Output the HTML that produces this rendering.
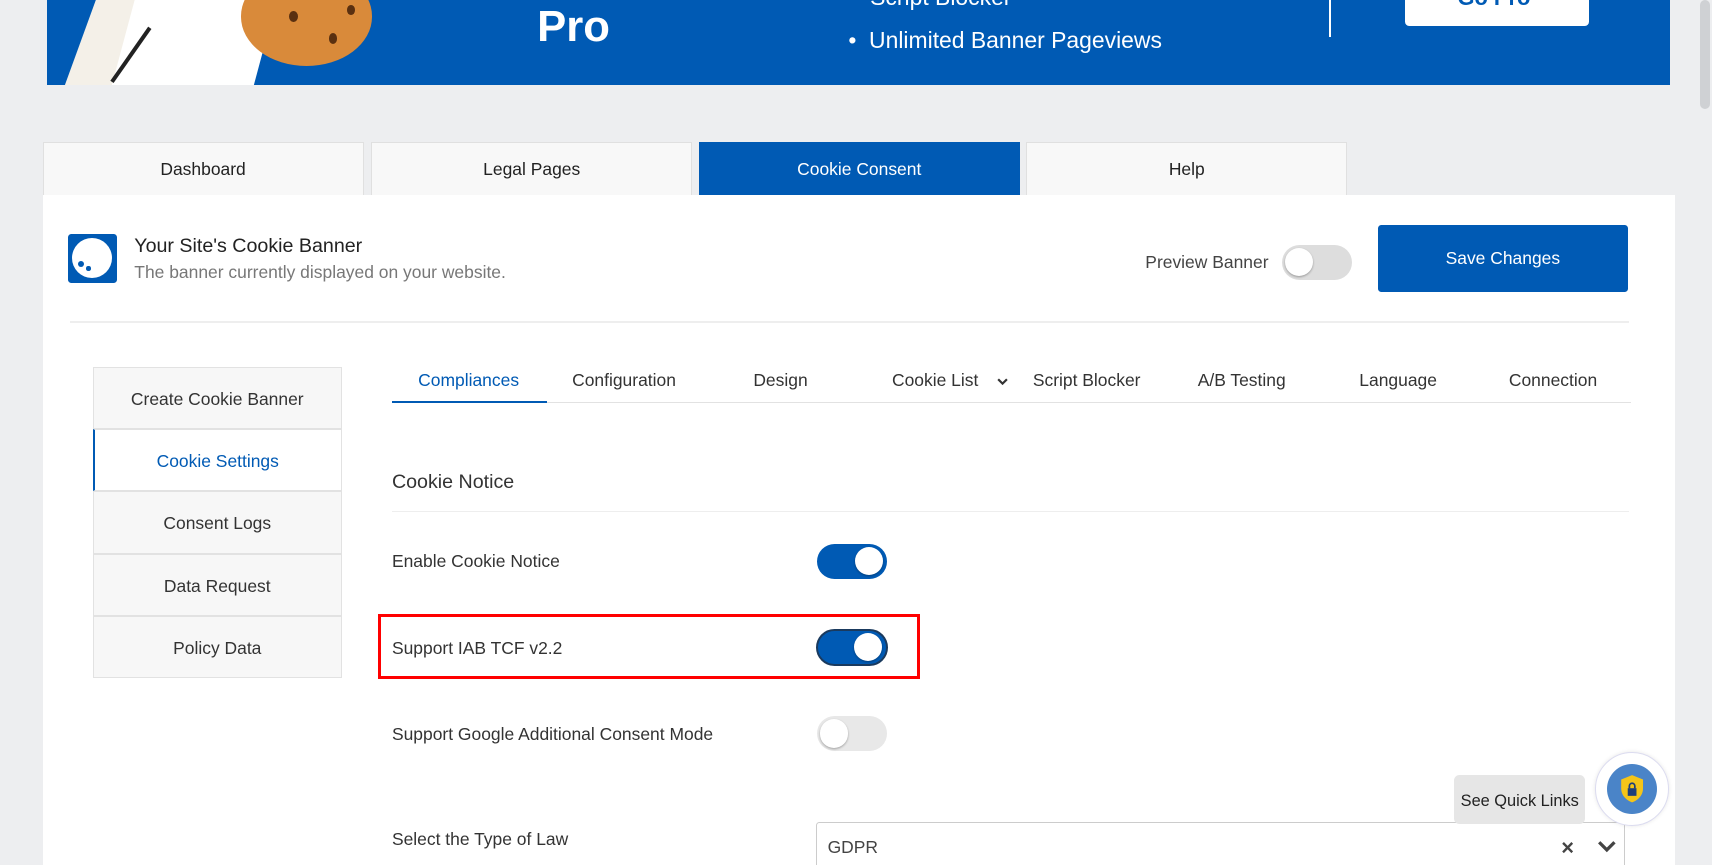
<!DOCTYPE html>
<html><head><meta charset="utf-8"><style>
*{box-sizing:border-box;margin:0;padding:0}
html,body{width:1712px;height:865px;overflow:hidden;background:#edeef0}
#w{zoom:1.0918;position:relative;width:1568px;height:792px;font-family:"Liberation Sans",sans-serif;color:#333}
.a{position:absolute}
.t{white-space:nowrap}
.tab{position:absolute;top:130px;height:49px;width:294px;background:#f8f8f8;border:1px solid #e0e0e0;border-bottom:none;text-align:center;line-height:49px;font-size:16px;color:#222}
.mi{position:absolute;left:85px;width:228px;height:57px;background:#f7f7f7;border:1px solid #e2e2e2;text-align:center;line-height:57px;font-size:16px;color:#333}
.st{position:absolute;top:339px;font-size:16px;color:#333;white-space:nowrap}
.tg{position:absolute;width:64px;height:32px;border-radius:16px}
.kn{position:absolute;top:3px;width:26px;height:26px;border-radius:50%;background:#fff;box-shadow:0 1px 2px rgba(0,0,0,.3)}
.lb{position:absolute;left:359px;font-size:16px;color:#333;white-space:nowrap}
</style></head><body><div id="w">
<div class="a" style="left:43px;top:0;width:1487px;height:78px;background:#005ab4;overflow:hidden">
 <div class="a" style="left:30px;top:-20px;width:150px;height:120px;background:#f4f0e8;transform:skewX(-20deg)"></div>
 <div class="a" style="left:70px;top:-20px;width:130px;height:120px;background:#fff;transform:skewX(-15deg)"></div>
 <div class="a" style="left:75px;top:20px;width:4px;height:60px;background:#222;transform:rotate(35deg)"></div>
 <div class="a" style="left:178px;top:-30px;width:120px;height:90px;border-radius:50%;background:#d98a3a"></div>
 <div class="a" style="left:222px;top:10px;width:8px;height:10px;border-radius:50%;background:#5a3010"></div>
 <div class="a" style="left:258px;top:30px;width:8px;height:10px;border-radius:50%;background:#5a3010"></div>
 <div class="a" style="left:275px;top:5px;width:7px;height:9px;border-radius:50%;background:#5a3010"></div>
 <div class="a t" style="left:449px;top:2px;font-size:40px;font-weight:bold;color:#fff">Pro</div>
 <div class="a t" style="left:754px;top:-15px;font-size:21px;color:#fff">Script Blocker</div>
 <div class="a t" style="left:734px;top:25px;font-size:21px;color:#fff">•&nbsp;&nbsp;Unlimited Banner Pageviews</div>
 <div class="a" style="left:1174px;top:0;width:2px;height:34px;background:#fff"></div>
 <div class="a" style="left:1244px;top:-10px;width:168px;height:34px;background:#fff;border-radius:4px;overflow:hidden"><div class="a t" style="left:48px;top:-4px;font-size:20px;font-weight:bold;color:#005ab4">Go Pro</div></div>
</div>
<div class="a" style="left:1557px;top:0;width:9px;height:100px;background:#cfd1d4;border-radius:5px"></div>
<div class="tab" style="left:39px">Dashboard</div>
<div class="tab" style="left:340px">Legal Pages</div>
<div class="tab" style="left:640px;background:#005ab4;border-color:#005ab4;color:#fff">Cookie Consent</div>
<div class="tab" style="left:940px">Help</div>
<div class="a" style="left:39px;top:179px;width:1495px;height:613px;background:#fff"></div>
<div class="a" style="left:62px;top:214px;width:45px;height:45px;background:#005ab4;border-radius:3px"><div class="a" style="left:4px;top:4px;width:37px;height:37px;border-radius:50%;background:#fff"></div><div class="a" style="left:9px;top:25px;width:6px;height:6px;border-radius:50%;background:#005ab4"></div><div class="a" style="left:17px;top:30px;width:4px;height:4px;border-radius:50%;background:#005ab4"></div></div>
<div class="a t" style="left:123px;top:215px;font-size:18px;color:#222">Your Site's Cookie Banner</div>
<div class="a t" style="left:123px;top:240px;font-size:16px;color:#777">The banner currently displayed on your website.</div>
<div class="a t" style="left:1049px;top:231px;font-size:16px;color:#444">Preview Banner</div>
<div class="tg" style="left:1174px;top:224px;background:#ddd"><div class="kn" style="left:3px"></div></div>
<div class="a" style="left:1262px;top:206px;width:229px;height:61px;background:#005ab4;border-radius:3px;color:#fff;font-size:16px;text-align:center;line-height:61px">Save Changes</div>
<div class="a" style="left:64px;top:294px;width:1428px;height:2px;background:#eeeeee"></div>
<div class="mi" style="top:336px">Create Cookie Banner</div>
<div class="mi" style="top:393px;background:#fff;color:#005ab4;border-left:2px solid #005ab4">Cookie Settings</div>
<div class="mi" style="top:450px">Consent Logs</div>
<div class="mi" style="top:507px">Data Request</div>
<div class="mi" style="top:564px">Policy Data</div>
<div class="st" style="left:383px;color:#005ab4">Compliances</div>
<div class="st" style="left:524px">Configuration</div>
<div class="st" style="left:690px">Design</div>
<div class="st" style="left:817px">Cookie List</div>
<svg class="a" style="left:912px;top:344px" width="12" height="10"><path d="M2 3l4 4 4-4" stroke="#333" stroke-width="2" fill="none"/></svg>
<div class="st" style="left:946px">Script Blocker</div>
<div class="st" style="left:1097px">A/B Testing</div>
<div class="st" style="left:1245px">Language</div>
<div class="st" style="left:1382px">Connection</div>
<div class="a" style="left:359px;top:368px;width:1135px;height:1px;background:#e2e2e2"></div>
<div class="a" style="left:359px;top:367px;width:142px;height:2px;background:#005ab4"></div>
<div class="lb" style="top:431px;font-size:18px">Cookie Notice</div>
<div class="a" style="left:359px;top:468px;width:1133px;height:1px;background:#eeeeee"></div>
<div class="lb" style="top:505px">Enable Cookie Notice</div>
<div class="tg" style="left:748px;top:498px;background:#005ab4"><div class="kn" style="left:35px"></div></div>
<div class="a" style="left:346px;top:562px;width:497px;height:60px;border:3px solid #f00"></div>
<div class="lb" style="top:584px">Support IAB TCF v2.2</div>
<div class="tg" style="left:747px;top:576px;background:#005ab4;border:2px solid #1a3a5e;width:66px;height:34px;border-radius:17px"><div class="kn" style="left:33px;top:2px"></div></div>
<div class="lb" style="top:663px">Support Google Additional Consent Mode</div>
<div class="tg" style="left:748px;top:656px;background:#e8e8e8"><div class="kn" style="left:3px"></div></div>
<div class="lb" style="top:759px">Select the Type of Law</div>
<div class="a" style="left:747px;top:753px;width:741px;height:50px;border:1px solid #ccc;border-radius:3px"></div>
<div class="a t" style="left:758px;top:767px;font-size:16px;color:#444">GDPR</div>
<div class="a t" style="left:1430px;top:765px;font-size:20px;font-weight:bold;color:#444">×</div>
<svg class="a" style="left:1463px;top:768px" width="18" height="14"><path d="M2 3l7 7 7-7" stroke="#444" stroke-width="3" fill="none"/></svg>
<div class="a t" style="left:1332px;top:710px;width:120px;height:45px;background:#e6e6e6;border-radius:5px;font-size:15px;color:#222;text-align:center;line-height:48px">See Quick Links</div>
<div class="a" style="left:1461px;top:689px;width:68px;height:68px;border-radius:50%;background:#fff;border:1px solid #dcdcf0;box-shadow:0 0 4px rgba(0,0,0,.1)"></div>
<div class="a" style="left:1472px;top:700px;width:46px;height:46px;border-radius:50%;background:#4a84c8"></div>
<svg class="a" style="left:1483px;top:709px" width="24" height="28"><path d="M12 1L2 5v8c0 7 5 11 10 13 5-2 10-6 10-13V5z" fill="#f5c518"/><rect x="8" y="13" width="8" height="7" fill="#1f3f7a"/><path d="M9.5 13v-2a2.5 2.5 0 0 1 5 0v2" stroke="#1f3f7a" stroke-width="1.6" fill="none"/></svg>
</div></body></html>
